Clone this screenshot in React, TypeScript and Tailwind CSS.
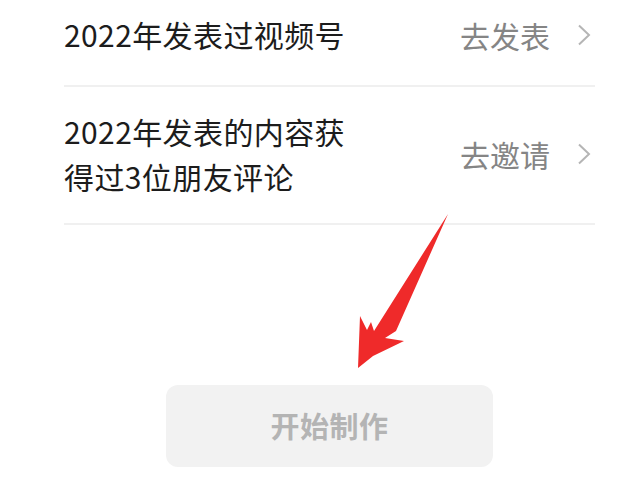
const CJK = "font-['Noto_Sans_CJK_SC','Noto_Sans',sans-serif]";

const tasks = [
  { id: 1, lines: ["2022年发表过视频号"], action: "去发表", h: "h-[85px] pb-[16px]" },
  { id: 2, lines: ["2022年发表的内容获", "得过3位朋友评论"], action: "去邀请", h: "h-[136px] pb-[3px]" },
];

const Chevron = () => (
  <svg width="14" height="22" viewBox="0 0 14 22" className="text-[#b5b5b5]">
    <polyline points="2,1.5 12,11 2,20.5" fill="none" stroke="currentColor" strokeWidth="2" />
  </svg>
);

const App = () => {
  return (
    <div className={`relative w-[640px] h-[480px] bg-white overflow-hidden ${CJK}`}>
      {/* TASK LIST */}
      <div className="ml-[64px] mr-[45px]">
        {tasks.map((task) => (
          <div key={task.id} className="border-b-2 border-[#f0f0f0]">
            <div className={`flex items-center justify-between ${task.h}`}>
              <div className="text-[30px] leading-[45px] tracking-[0.4px] text-[#1c1c1c]">
                {task.lines.map((line) => (
                  <div key={line}>{line}</div>
                ))}
              </div>
              <div className="flex items-center gap-[27px] pr-[4px] text-[#858585]">
                <span className="text-[30px] leading-none">{task.action}</span>
                <Chevron />
              </div>
            </div>
          </div>
        ))}
      </div>

      {/* BUTTON */}
      <div className="mt-[160px] ml-[166px] w-[327px] h-[82px] rounded-[12px] bg-[#f2f2f2] flex items-center justify-center">
        <span className="text-[29px] font-bold text-[#b4b4b4] tracking-[0.5px]">开始制作</span>
      </div>

      {/* ARROW */}
      <svg className="absolute left-0 top-0" width="640" height="480" viewBox="0 0 640 480">
        <polygon
          fill="#ef2a2a"
          points="448,214 396,331 385,338 404,341 373,356 358,368 360,316 367,330 371,322 374,331"
        />
      </svg>
    </div>
  );
};

export default App;
